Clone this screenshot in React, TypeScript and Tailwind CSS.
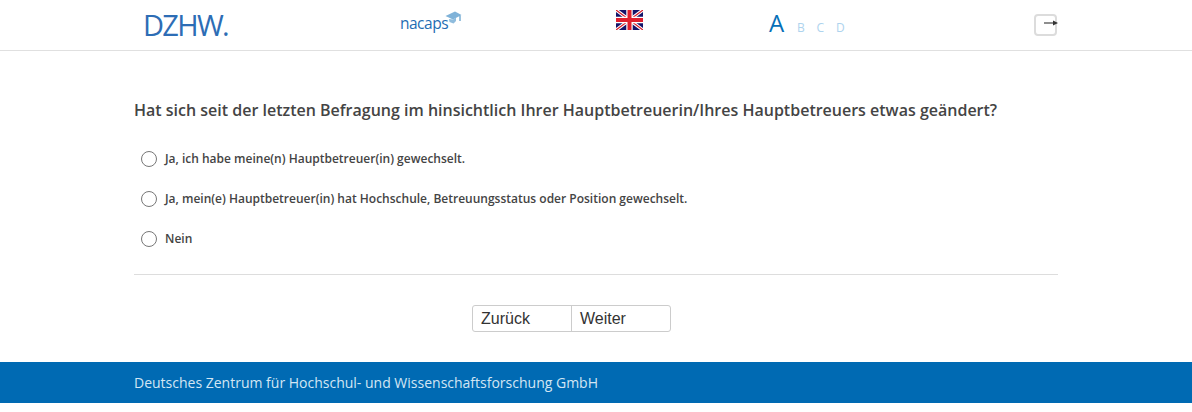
import React from "react";

const options = [
  "Ja, ich habe meine(n) Hauptbetreuer(in) gewechselt.",
  "Ja, mein(e) Hauptbetreuer(in) hat Hochschule, Betreuungsstatus oder Position gewechselt.",
  "Nein",
];

function Flag() {
  return (
    <svg width="27" height="20" viewBox="0 0 27 20" className="block">
      <rect width="27" height="20" fill="#14146a" />
      <path d="M0 0L27 20M27 0L0 20" stroke="#fff" strokeWidth="3.4" />
      <path d="M0 0L27 20M27 0L0 20" stroke="#d81e2c" strokeWidth="1.2" />
      <path d="M13.5 0V20M0 10H27" stroke="#fff" strokeWidth="6.4" />
      <path d="M13.5 0V20M0 10H27" stroke="#e01f2d" strokeWidth="4" />
    </svg>
  );
}

function Cap() {
  return (
    <svg width="17" height="14" viewBox="0 0 17 14" className="block">
      <path d="M0.5 5L10 0.5L16.5 4L8 8.5Z" fill="#7fb2d8" />
      <path d="M4 8L4.5 11L8.5 12.5L11 10L11 6.5L8 8.5Z" fill="#8fbcdd" />
      <path d="M15 4.5V10" stroke="#6fa8d0" strokeWidth="1.4" />
    </svg>
  );
}

function Exit() {
  return (
    <div className="relative h-[22px] w-[23px] rounded-[4px] border-2 border-[#dcdcdc]">
      <svg width="16" height="8" viewBox="0 0 16 8" className="absolute left-[8px] top-[3px]">
        <path d="M0 4H10" stroke="#444" strokeWidth="1.2" />
        <path d="M9 1.5L14 4L9 6.5Z" fill="#333" />
      </svg>
    </div>
  );
}

export default function App() {
  return (
    <div className="h-[412px] w-[1192px] overflow-hidden bg-white font-['Open_Sans',sans-serif] text-[#444]">
      <header className="flex h-[51px] items-start border-b border-[#e0e0e0]">
        <div className="ml-[143px] mt-[5px] w-[257px] text-[29px] font-normal leading-[40px] tracking-[-1.7px] text-[#2d6db5]">
          DZHW.
        </div>
        <div className="mt-[11px] flex w-[216px] items-start">
          <span className="mt-[1px] text-[15.5px] leading-[22px] tracking-[-0.5px] text-[#1f6db3]">nacaps</span>
          <span className="-ml-[3px]"><Cap /></span>
        </div>
        <div className="mt-[10px] w-[153px]"><Flag /></div>
        <div className="mt-[5px] flex w-[265px] items-baseline">
          <span className="w-[28px] text-[24px] font-[450] leading-[36px] text-[#066fb8]">A</span>
          <span className="w-[19.5px] text-[12px] text-[#aed3ee]">B</span>
          <span className="w-[19.5px] text-[12px] text-[#aed3ee]">C</span>
          <span className="text-[12px] text-[#aed3ee]">D</span>
        </div>
        <div className="mt-[14px]"><Exit /></div>
      </header>

      <main className="mx-[134px] w-[924px]">
        <h1 className="mt-[48px] text-[16px] font-semibold leading-[22px] text-[#444]">
          Hat sich seit der letzten Befragung im hinsichtlich Ihrer Hauptbetreuerin/Ihres Hauptbetreuers etwas geändert?
        </h1>
        <div className="mt-[28px] flex flex-col gap-[20px] pl-[7px]">
          {options.map((o) => (
            <label key={o} className="flex h-[20px] items-center">
              <span className="h-[16px] w-[16px] rounded-full border border-[#777] bg-white" />
              <span className="ml-[8px] text-[12px] font-semibold leading-[20px] text-[#444]">{o}</span>
            </label>
          ))}
        </div>
        <div className="mt-[25px] border-t border-[#ddd]" />
        <div className="mt-[30px] flex pl-[338px]">
          <div className="flex h-[27px] w-[199px] rounded-[3px] border border-[#ccc] font-['Liberation_Sans',sans-serif] text-[16px] leading-[25px] text-[#333]">
            <span className="w-[99px] border-r border-[#ccc] pl-[8px]">Zurück</span>
            <span className="pl-[8px]">Weiter</span>
          </div>
        </div>
      </main>

      <footer className="mt-[30px] flex h-[41px] items-center bg-[#006ab3] pl-[134px] text-[14px] text-[#d3e6f4]">
        Deutsches Zentrum für Hochschul- und Wissenschaftsforschung GmbH
      </footer>
    </div>
  );
}
